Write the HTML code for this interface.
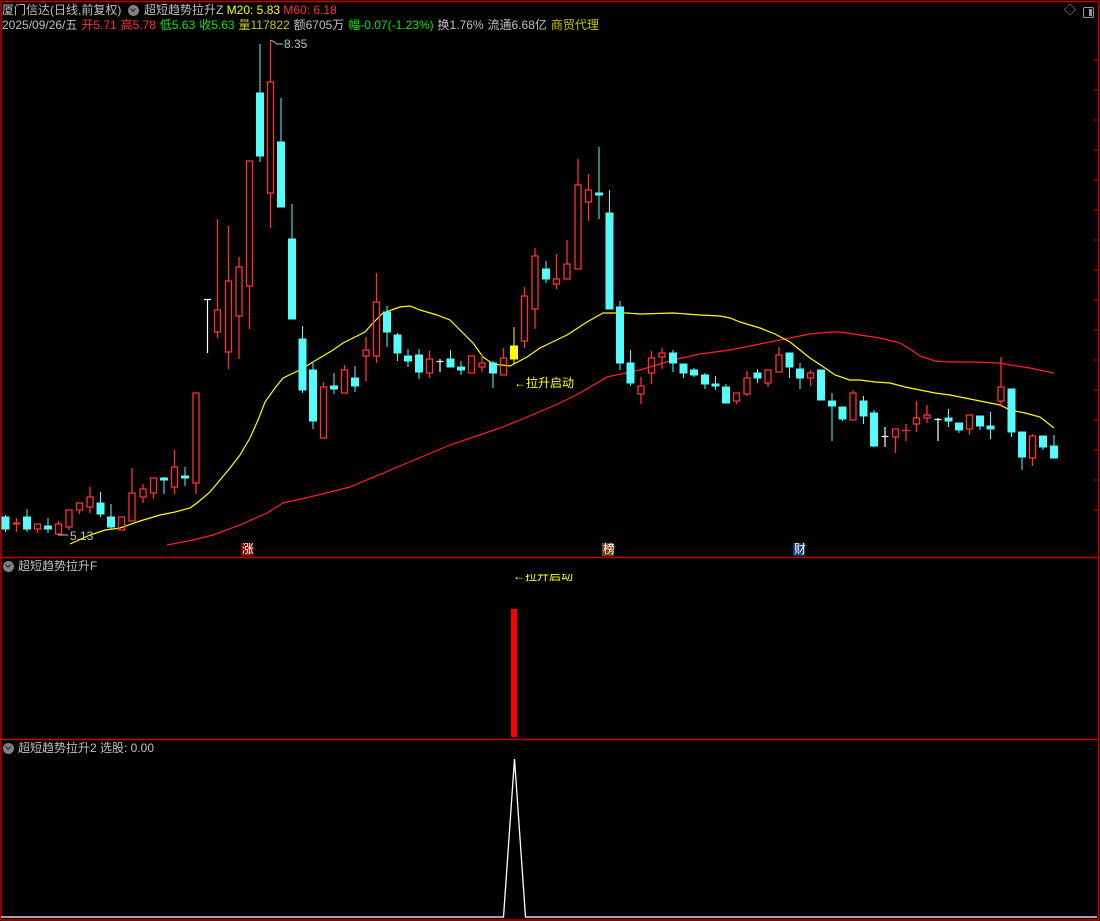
<!DOCTYPE html>
<html><head><meta charset="utf-8"><style>
html,body{margin:0;padding:0;background:#000;}
body{width:1100px;height:921px;position:relative;overflow:hidden;font-family:"Liberation Sans","Noto Sans CJK SC",sans-serif;font-size:12px;color:#c0c0c0;}
.t{position:absolute;white-space:nowrap;line-height:14px;}
.r{color:#ff3232}.g{color:#00e600}.y{color:#ffff00}.v{color:#c8c800}
.ic{position:absolute;width:11px;height:11px;border-radius:50%;background:#808080;}
.ic:after{content:"";position:absolute;left:3px;top:2px;width:3px;height:3px;border-right:1.5px solid #222;border-bottom:1.5px solid #222;transform:rotate(45deg);}
</style></head><body>
<svg width="1100" height="921" style="position:absolute;left:0;top:0">
<g stroke="#c00000" stroke-width="1.5" fill="none">
<path d="M1 1.5H1098.5V920H1M1 1V920M1 557.5H1098M1 739.5H1098"/>
</g>
<g stroke="#c00000" stroke-width="1"><path d="M7 0V3M42 0V3M77 0V3M1094 60h4M1094 90h4M1094 120h4M1094 150h4M1094 180h4M1094 210h4M1094 240h4M1094 270h4M1094 300h4M1094 330h4M1094 360h4M1094 390h4M1094 420h4M1094 450h4M1094 480h4M1094 510h4"/></g>
<polyline fill="none" stroke="#ff2020" stroke-width="1.2" points="167,545 193,540 213,535 240,525 267,513 283,503 310,497 350,487 400,466 450,445 500,428 520,420 560,403 580,393 607,377 640,370 673,360 700,354 730,350 750,346 770,342 790,338 810,334 830,332 840,332 860,335 880,338 900,343 910,349 920,356 935,361 950,362 975,362 1000,363 1010,365 1030,368 1054,373"/>
<polyline fill="none" stroke="#ffff00" stroke-width="1.2" points="70,544 90,535 105,530 120,528 140,521 160,515 175,512 190,508 197,503 210,492 220,480 230,468 240,455 250,438 258,420 265,402 275,388 283,378 300,370 313,362 333,350 343,343 365,332 372,324 383,313 400,307 410,306 420,310 437,315 450,320 463,333 473,343 483,357 493,364 510,366 527,357 540,348 567,335 587,322 603,313 627,313 640,314 673,313 700,315 720,316 730,318 740,322 760,328 775,334 790,342 800,350 810,358 825,368 835,375 850,380 860,380 875,382 890,383 905,387 920,390 935,393 950,395 965,398 985,402 1000,405 1010,410 1025,413 1040,417 1054,428"/>
<path fill="#54fcfc" stroke="#54fcfc" stroke-width="1" d="M5.5 515V532M2 517h7v12h-7zM27 509V532M23.5 517h7v12h-7zM48 518V533M44.5 526h7v3h-7zM100.5 492V517M97 503h7v11h-7zM111 504V529M107.5 517h7v10h-7zM164 477V494M160.5 478h7v2h-7zM185 467V486M181.5 476h7v2h-7zM260 44V162M256.5 93h7v63h-7zM281 98V207M277.5 142h7v65h-7zM292 204V319M288.5 239h7v80h-7zM302.5 326V393M299 339h7v51h-7zM313 363V429M309.5 370h7v51h-7zM334 373V394M330.5 386h7v3h-7zM355 366V392M351.5 378h7v8h-7zM387 306V347M383.5 312h7v20h-7zM397.5 333V361M394 335h7v18h-7zM408 349V367M404.5 356h7v5h-7zM419 349V379M415.5 355h7v17h-7zM450.5 350V367M447 359h7v8h-7zM461 361V375M457.5 367h7v3h-7zM493 361V388M489.5 363h7v10h-7zM546 261V283M542.5 269h7v10h-7zM599 147V219M595.5 193h7v2h-7zM609.5 190V309M606 213h7v96h-7zM620 301V370M616.5 307h7v56h-7zM630.5 350V386M627 363h7v20h-7zM673 350V372M669.5 353h7v10h-7zM683.5 364V378M680 364h7v9h-7zM694 368V377M690.5 370h7v5h-7zM705 373V389M701.5 375h7v9h-7zM715.5 376V390M712 384h7v2h-7zM726 384V403M722.5 387h7v16h-7zM757.5 369V383M754 373h7v5h-7zM789.5 353V378M786 353h7v14h-7zM800 363V389M796.5 369h7v9h-7zM821 370V400M817.5 370h7v30h-7zM832 393V441M828.5 401h7v5h-7zM842.5 407V421M839 407h7v12h-7zM863.5 396V424M860 401h7v15h-7zM874 410V447M870.5 413h7v33h-7zM948.5 409V427M945 418h7v3h-7zM959 423V433M955.5 423h7v7h-7zM980 416V430M976.5 416h7v10h-7zM990.5 412V439M987 426h7v3h-7zM1011.5 389V437M1008 389h7v43h-7zM1022 432V470M1018.5 432h7v25h-7zM1043 436V450M1039.5 436h7v11h-7zM1054 435V458M1050.5 446h7v12h-7z"/>
<path fill="none" stroke="#ff3232" stroke-width="1.3" d="M16.5 518V523M16.5 524V532M13.5 523h6v1h-6zM37.5 529V533M34.5 524h6v5h-6zM58.5 521V524M55.5 524h6v10h-6zM69 527V530M66 510h6v17h-6zM79.5 510V514M76.5 503h6v7h-6zM90 487V497M90 507V513M87 497h6v10h-6zM118.5 517h6v13h-6zM132 468V493M129 493h6v28h-6zM143 484V489M143 497V503M140 489h6v8h-6zM153.5 493V499M150.5 478h6v15h-6zM174.5 450V467M174.5 487V494M171.5 467h6v20h-6zM196 483V494M193 393h6v90h-6zM217.5 219V310M217.5 332V338M214.5 310h6v22h-6zM228.5 226V281M228.5 352V369M225.5 281h6v71h-6zM239 257V267M239 316V359M236 267h6v49h-6zM249.5 286V329M246.5 161h6v125h-6zM270.5 40V82M270.5 193V228M267.5 82h6v111h-6zM323.5 382V387M320.5 387h6v51h-6zM344.5 365V370M341.5 370h6v23h-6zM366 337V350M366 356V381M363 350h6v6h-6zM376.5 273V302M376.5 356V363M373.5 302h6v54h-6zM429.5 351V359M429.5 373V378M426.5 359h6v14h-6zM468.5 356h6v17h-6zM482 354V363M482 367V372M479 363h6v4h-6zM503.5 348V358M500.5 358h6v17h-6zM524.5 287V296M524.5 341V348M521.5 296h6v45h-6zM535 248V256M535 309V329M532 256h6v53h-6zM556.5 254V279M556.5 284V289M553.5 279h6v5h-6zM567 240V264M564 264h6v15h-6zM578 159V185M575 185h6v84h-6zM588.5 174V190M588.5 202V221M585.5 190h6v12h-6zM641 377V386M641 394V404M638 386h6v8h-6zM651.5 351V358M651.5 373V384M648.5 358h6v15h-6zM662 348V353M662 357V369M659 353h6v4h-6zM736.5 401V404M733.5 393h6v8h-6zM747 371V378M747 394V396M744 378h6v16h-6zM768 383V387M765 370h6v13h-6zM779 347V355M776 355h6v17h-6zM810.5 370V373M810.5 378V386M807.5 373h6v5h-6zM853 390V393M850 393h6v27h-6zM895.5 437V453M892.5 429h6v8h-6zM906 424V441M902 430.5h8M916.5 401V418M916.5 424V432M913.5 418h6v6h-6zM927 405V415M927 418V423M924 415h6v3h-6zM969.5 429V435M966.5 415h6v14h-6zM1001 357V387M1001 401V407M998 387h6v14h-6zM1032.5 434V436M1032.5 458V466M1029.5 436h6v22h-6z"/>
<path fill="none" stroke="#ffffff" stroke-width="1.2" d="M207.5 299V353M204 299.5h7M440 359V372M436.5 361.5h7M885 427V447M881.5 436.5h7M938 418V441M934.5 419.5h7"/>
<path fill="#ffff00" stroke="#ffff00" d="M514 327V364M510.5 346h7v13h-7z"/>
<path fill="none" stroke="#c0c0c0" d="M271 40l6 4h6M58 535h10"/>
<rect x="241" y="543" width="12" height="13" fill="#8a0000"/>
<rect x="602" y="543" width="12" height="13" fill="#7a4010"/>
<rect x="793" y="543" width="12" height="13" fill="#103c78"/>
<rect x="511" y="609" width="6" height="128" fill="#ff0000"/>
<polyline fill="none" stroke="#ffffff" stroke-width="1.3" points="1,917 503.5,917 514.5,759 525.5,917 1097,917"/>
</svg>
<div class="t" style="left:2px;top:3px">厦门信达(日线,前复权)</div>
<div class="ic" style="left:128px;top:5px"></div>
<div class="t" style="left:144px;top:3px">超短趋势拉升Z <span class="y">M20: 5.83</span> <span class="r">M60: 6.18</span></div>
<div class="t" style="left:2px;top:18px;word-spacing:0.6px">2025/09/26/五 <span class="r">开5.71</span> <span class="r">高5.78</span> <span class="g">低5.63</span> <span class="g">收5.63</span> <span class="v">量117822</span> 额6705万 <span class="g">幅-0.07(-1.23%)</span> 换1.76% 流通6.68亿 <span class="v">商贸代理</span></div>
<div class="t" style="left:284px;top:37px">8.35</div>
<div class="t" style="left:70px;top:529px">5.13</div>
<div class="t y" style="left:514px;top:376px">←拉升启动</div>
<div class="t" style="left:242px;top:542px;color:#fff">涨</div>
<div class="t" style="left:603px;top:542px;color:#fff">榜</div>
<div class="t" style="left:794px;top:542px;color:#fff">财</div>
<div style="position:absolute;left:513px;top:574px;width:80px;height:10px;overflow:hidden"><div class="t y" style="left:0;top:-5px">←拉升启动</div></div>
<div class="ic" style="left:3px;top:561px"></div>
<div class="t" style="left:18px;top:559px">超短趋势拉升F</div>
<div class="ic" style="left:3px;top:743px"></div>
<div class="t" style="left:18px;top:741px">超短趋势拉升2 选股: 0.00</div>
<div class="t" style="left:1064px;top:3px;color:#999">◇</div>
<div style="position:absolute;left:1083px;top:7px;width:9px;height:9px;border:1px solid #999;border-radius:2px"><div style="position:absolute;right:1px;top:1px;width:3px;height:7px;background:#999"></div></div>
</body></html>
